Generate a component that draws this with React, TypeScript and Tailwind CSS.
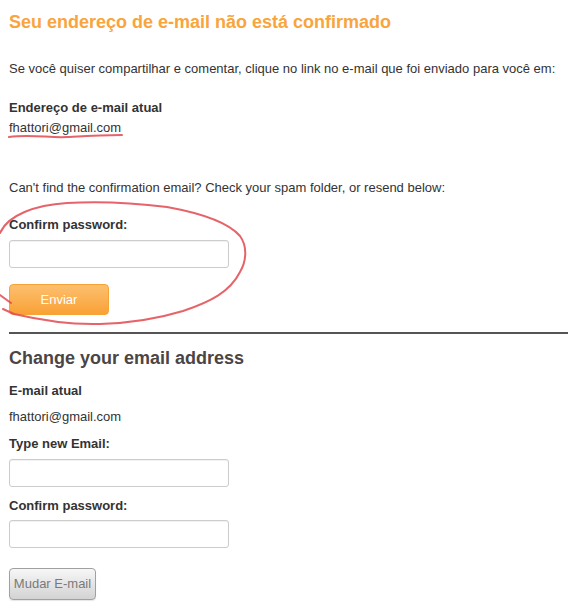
const Label = ({ children, className = '' }: { children: React.ReactNode; className?: string }) => (
  <div className={`pt-px font-bold text-[13px] leading-5 text-[#333] ${className}`}>{children}</div>
);

const TextInput = ({ className = '' }: { className?: string }) => (
  <input
    type="text"
    className={`block w-[220px] h-[28px] rounded-[3px] border border-[#cccccc] bg-white shadow-[inset_0_1px_1px_rgba(0,0,0,0.06)] ${className}`}
  />
);

// hand-drawn red marks over the screenshot
const Annotations = () => (
  <svg
    className="absolute top-0 left-0 pointer-events-none"
    width="568"
    height="608"
    viewBox="0 0 568 608"
    fill="none"
  >
    <path
      d="M9,137 C30,134 50,138 67,137 C85,136 100,135 122,135"
      stroke="#e2484f"
      strokeWidth="2"
      strokeOpacity="0.85"
      strokeLinecap="round"
    />
    <path
      d="M0,233 C8,215 35,205 67,203 C100,201 135,203 167,207 C200,213 228,222 240,236 C248,247 246,262 240,272 C230,292 210,302 183,311 C160,318 135,323 100,324 C70,325 40,320 14,314 L3,309"
      stroke="#e2484f"
      strokeWidth="2"
      strokeOpacity="0.85"
      strokeLinecap="round"
    />
    <path d="M0,295 L11,303" stroke="#e2484f" strokeWidth="2" strokeOpacity="0.85" strokeLinecap="round" />
  </svg>
);

export default function App() {
  return (
    <div className="relative w-[568px] h-[608px] bg-white overflow-hidden font-['Liberation_Sans',Arial,sans-serif] text-[13px] text-[#333]">
      <div className="pl-[9px]">
        <h1 className="mt-[11px] pt-px text-[18px] leading-5 font-bold text-[#f9a43c]">
          Seu endereço de e-mail não está confirmado
        </h1>
        <p className="mt-[26px] pt-px leading-5">
          Se você quiser compartilhar e comentar, clique no link no e-mail que foi enviado para você em:
        </p>
        <Label className="mt-[18px]">Endereço de e-mail atual</Label>
        <div className="leading-5">fhattori@gmail.com</div>

        <p className="mt-[39px] pt-px leading-5">
          Can't find the confirmation email? Check your spam folder, or resend below:
        </p>
        <Label className="mt-[16px]">Confirm password:</Label>
        <TextInput className="mt-[5px]" />
        <button className="mt-[16px] block w-[100px] h-[31px] rounded-[4px] border border-[#f6a436] bg-gradient-to-b from-[#fdbf6d] to-[#f9a133] text-white text-[13px]">
          Enviar
        </button>
      </div>

      <div className="mt-[17px] ml-[9px] h-[2px] bg-[#555555]" />

      <div className="pl-[9px]">
        <h2 className="mt-[13px] pt-px text-[18px] leading-5 font-bold text-[#4b4545]">Change your email address</h2>
        <Label className="mt-[12px]">E-mail atual</Label>
        <div className="mt-[5px] pt-px leading-5">fhattori@gmail.com</div>
        <Label className="mt-[6px]">Type new Email:</Label>
        <TextInput className="mt-[5px]" />
        <Label className="mt-[8px]">Confirm password:</Label>
        <TextInput className="mt-[4px]" />
        <button className="mt-[20px] block w-[87px] h-[32px] rounded-[4px] border border-[#a0a0a0] bg-gradient-to-b from-[#f7f7f7] to-[#d3d3d3] text-[#7a7a7a] text-[13px] shadow-[0_1px_1px_rgba(0,0,0,0.1)]">
          Mudar E-mail
        </button>
      </div>

      <Annotations />
    </div>
  );
}
